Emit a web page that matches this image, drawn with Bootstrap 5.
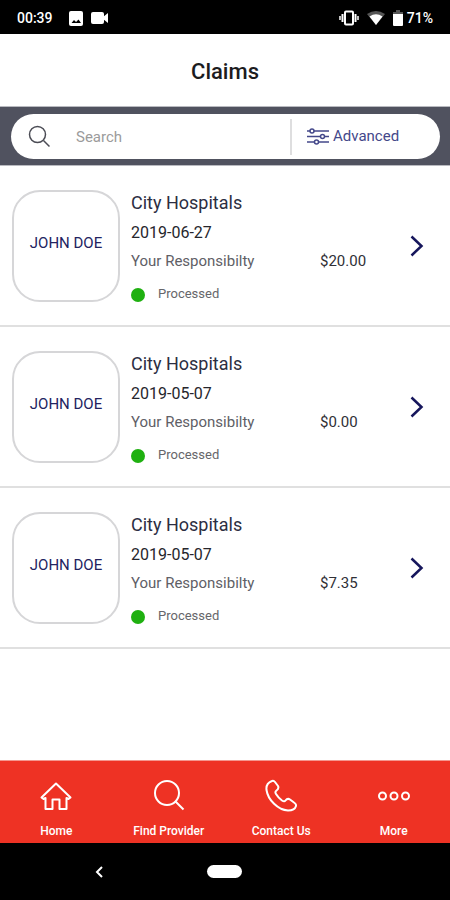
<!DOCTYPE html>
<html lang="en">
<head>
<meta charset="utf-8">
<meta name="viewport" content="width=device-width, initial-scale=1">
<title>Claims</title>
<link href="https://cdn.jsdelivr.net/npm/bootstrap@5.3.0/dist/css/bootstrap.min.css" rel="stylesheet">
<style>
body { font-family: Roboto, "Liberation Sans", sans-serif; color: #23253a; }
svg { display: block; flex: none; }
.status-bar { height: 34px; padding: 2px 17px 0 17px; font-size: 14px; font-weight: 500; }
.page-title { font-size: 22px; font-weight: 500; line-height: 28px; padding: 24px 0 20px; color: #1c1c1e; }
.search-strip { background: #50525f; padding: 7px 10px 6px 11px; border-bottom: 1px solid #b9bac0; border-top: 1px solid #b9bac0; }
.search-pill { height: 45px; padding-left: 17px; }
.search-pill input { font-size: 15px; height: 40px; padding: 0 0 0 25px; }
.search-pill input::placeholder { color: #9b9b9b; opacity: 1; }
.pill-divider { width: 3px; height: 36px; background: #dededf; }
.advanced { width: 148px; padding-left: 15px; gap: 4px; font-size: 15px; color: #44488a; }
.claim { padding: 24px 26px 16px 12px; border-bottom: 2px solid #e0e0e0 !important; gap: 11px; }
.avatar { width: 108px; height: 112px; border: 2px solid #d6d6d8; border-radius: 28px; font-size: 15px; color: #23235f; flex: none; padding-bottom: 5px; }
.claim-name { font-size: 18px; line-height: 26px; color: #2c2e42; }
.claim-date { font-size: 16px; line-height: 34px; color: #26262c; }
.claim-due { font-size: 15px; line-height: 22px; color: #606066; }
.claim-amount { width: 79px; color: #303036; }
.claim-state { font-size: 13px; line-height: 30px; margin-top: 7px; gap: 13px; color: #66666a; }
.state-dot { width: 14px; height: 14px; background: #1fb010; margin-top: 2px; }
.claim-arrow { margin-top: 45px; }
.tab-bar { background: #ee3224; padding-top: 18px; height: 83px; border-top: 1px solid #f4978f; }
.tab-bar a { font-size: 12px; line-height: 16px; font-weight: 500; gap: 10px; color: #fff; }
.system-nav { height: 57px; }
.system-nav button { width: 34px; height: 34px; }
.home-pill { width: 35px; height: 13px; }
</style>
<script src="https://cdn.jsdelivr.net/npm/bootstrap@5.3.0/dist/js/bootstrap.bundle.min.js"></script>
</head>
<body class="bg-white">
<div class="d-flex flex-column min-vh-100">
  <div class="status-bar bg-black text-white d-flex align-items-center">
    <span>00:39</span>
    <svg class="ms-3" width="14" height="15" viewBox="0 0 14 15" aria-hidden="true"><rect width="14" height="15" rx="2" fill="#fff"/><path d="M2.500 12 5 9l2 2 2.500-2.500L12 12z" fill="#000"/></svg>
    <svg class="ms-2" width="18" height="14" viewBox="0 0 18 14" aria-hidden="true"><rect y="1" width="13" height="12" rx="2" fill="#fff"/><path d="M12 6l5-4v10l-5-4z" fill="#fff"/></svg>
    <svg class="ms-auto" width="20" height="16" viewBox="0 0 20 16" fill="none" stroke="#fff" aria-hidden="true"><rect x="6" y="1.500" width="8" height="13" rx="1" stroke-width="2"/><path d="M3.500 4v8M16.500 4v8" stroke-width="2"/><path d="M1 6v4M19 6v4" stroke-width="1.500"/></svg>
    <svg class="ms-2" width="18" height="14" viewBox="0 0 18 14" aria-hidden="true"><path d="M0 3Q9-3 18 3L9 14z" fill="#555"/><path d="M2.500 5.500Q9 1 15.500 5.500L9 14z" fill="#fff"/></svg>
    <svg class="ms-2" width="10" height="16" viewBox="0 0 10 16" aria-hidden="true"><path d="M3 0h4v2h3v3H0V2h3z" fill="#555"/><path d="M0 4h10v11q0 1-1 1H1q-1 0-1-1z" fill="#fff"/></svg>
    <span class="ms-1">71%</span>
  </div>

  <header><h1 class="page-title text-center m-0">Claims</h1></header>

  <form class="search-strip" role="search">
    <div class="search-pill bg-white rounded-pill d-flex align-items-center">
      <svg width="23" height="23" viewBox="0 0 23 23" fill="none" stroke="#4b4c55" stroke-width="1.500" aria-hidden="true"><circle cx="9.500" cy="9.500" r="8"/><path d="m15.500 15.500 6 6"/></svg>
      <label class="visually-hidden" for="claim-search">Search claims</label>
      <input id="claim-search" class="form-control border-0 shadow-none bg-transparent flex-fill" type="text" placeholder="Search">
      <span class="pill-divider"></span>
      <button type="button" class="advanced btn border-0 rounded-0 d-flex align-items-center flex-shrink-0 pe-0">
        <svg width="22" height="17" viewBox="0 0 22 17" fill="none" stroke="#44488a" stroke-width="1.500" aria-hidden="true"><path d="M0 3h3M7 3h15M0 8.500h13.500M17.500 8.500H22M0 14h7.500M11.500 14H22"/><circle cx="5" cy="3" r="2"/><circle cx="15.500" cy="8.500" r="2"/><circle cx="9.500" cy="14" r="2"/></svg>
        Advanced
      </button>
    </div>
  </form>

  <main class="list-group list-group-flush">
    <a href="#" class="claim list-group-item list-group-item-action d-flex align-items-start">
      <span class="avatar d-flex align-items-center justify-content-center">JOHN DOE</span>
      <span class="flex-fill">
        <span class="claim-name d-block">City Hospitals</span>
        <span class="claim-date d-block">2019-06-27</span>
        <span class="claim-due d-flex"><span class="flex-fill">Your Responsibilty</span><span class="claim-amount">$20.00</span></span>
        <span class="claim-state d-flex align-items-center"><span class="state-dot rounded-circle"></span>Processed</span>
      </span>
      <svg class="claim-arrow" width="14" height="22" viewBox="0 0 14 22" fill="none" stroke="#16165c" stroke-width="2.500" aria-hidden="true"><path d="m1.500 1.500 10 9.500-10 9.500"/></svg>
    </a>
    <a href="#" class="claim list-group-item list-group-item-action d-flex align-items-start">
      <span class="avatar d-flex align-items-center justify-content-center">JOHN DOE</span>
      <span class="flex-fill">
        <span class="claim-name d-block">City Hospitals</span>
        <span class="claim-date d-block">2019-05-07</span>
        <span class="claim-due d-flex"><span class="flex-fill">Your Responsibilty</span><span class="claim-amount">$0.00</span></span>
        <span class="claim-state d-flex align-items-center"><span class="state-dot rounded-circle"></span>Processed</span>
      </span>
      <svg class="claim-arrow" width="14" height="22" viewBox="0 0 14 22" fill="none" stroke="#16165c" stroke-width="2.500" aria-hidden="true"><path d="m1.500 1.500 10 9.500-10 9.500"/></svg>
    </a>
    <a href="#" class="claim list-group-item list-group-item-action d-flex align-items-start">
      <span class="avatar d-flex align-items-center justify-content-center">JOHN DOE</span>
      <span class="flex-fill">
        <span class="claim-name d-block">City Hospitals</span>
        <span class="claim-date d-block">2019-05-07</span>
        <span class="claim-due d-flex"><span class="flex-fill">Your Responsibilty</span><span class="claim-amount">$7.35</span></span>
        <span class="claim-state d-flex align-items-center"><span class="state-dot rounded-circle"></span>Processed</span>
      </span>
      <svg class="claim-arrow" width="14" height="22" viewBox="0 0 14 22" fill="none" stroke="#16165c" stroke-width="2.500" aria-hidden="true"><path d="m1.500 1.500 10 9.500-10 9.500"/></svg>
    </a>
  </main>

  <footer class="mt-auto">
    <nav class="tab-bar row g-0 text-center" aria-label="Main">
      <a href="#" class="col d-flex flex-column align-items-center text-decoration-none">
        <svg width="32" height="34" viewBox="0 0 32 34" fill="none" stroke="#fff" stroke-width="2" stroke-linejoin="round" aria-hidden="true"><path d="M1.500 18.500 16 4.500l14.500 14-2 1.500-2-1v11h-7v-9.500h-7V30h-7V19l-2 1z"/></svg>
        Home
      </a>
      <a href="#" class="col d-flex flex-column align-items-center text-decoration-none">
        <svg width="32" height="34" viewBox="0 0 32 34" fill="none" stroke="#fff" stroke-width="2" aria-hidden="true"><circle cx="14" cy="14" r="12"/><path d="m22.500 22.500 8 8"/></svg>
        Find Provider
      </a>
      <a href="#" class="col d-flex flex-column align-items-center text-decoration-none">
        <svg width="32" height="34" viewBox="0 0 32 34" fill="none" stroke="#fff" stroke-width="2" stroke-linejoin="round" aria-hidden="true"><path d="M7 2C3 3.500 1 7 1.500 11 3 21 13 31 23 31.500c4 0 7-1 8-4.500.4-1.500-.5-2.500-2-3.500l-4-3c-1.500-1-3-1-4.500 1-1 1.300-2 1-3.500 0-2.500-2-4.500-4-6-6.500-1-1.500-.8-2.500.5-3.500 2-1.500 2.500-2.500 1.500-4.500l-3-4C9 1.700 8 1.500 7 2z"/></svg>
        Contact Us
      </a>
      <a href="#" class="col d-flex flex-column align-items-center text-decoration-none">
        <svg width="32" height="34" viewBox="0 0 32 34" fill="none" stroke="#fff" stroke-width="2" aria-hidden="true"><circle cx="4.500" cy="17" r="3.500"/><circle cx="16" cy="17" r="3.500"/><circle cx="27.500" cy="17" r="3.500"/></svg>
        More
      </a>
    </nav>
    <div class="system-nav bg-black row g-0 align-items-center">
      <div class="col-4 d-flex justify-content-center ps-5">
        <button type="button" class="btn border-0 p-0 d-flex align-items-center justify-content-center" aria-label="Back">
          <svg width="8" height="12" viewBox="0 0 8 12" fill="none" stroke="#fff" stroke-width="2" aria-hidden="true"><path d="M7 1 2 6l5 5"/></svg>
        </button>
      </div>
      <div class="col-4 d-flex justify-content-center">
        <button type="button" class="btn border-0 p-0 d-flex align-items-center justify-content-center" aria-label="Home"><span class="home-pill bg-white rounded-pill flex-shrink-0"></span></button>
      </div>
    </div>
  </footer>
</div>
</body>
</html>
